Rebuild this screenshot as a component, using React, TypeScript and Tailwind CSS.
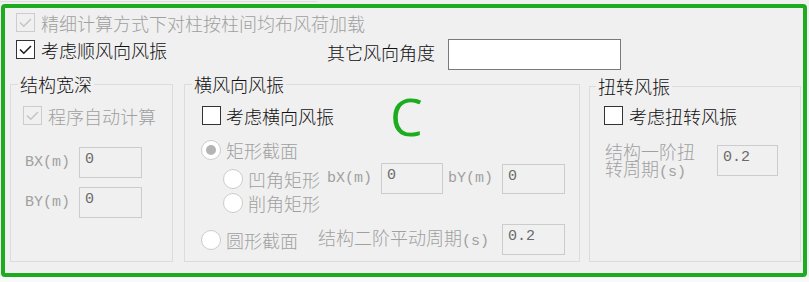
import React from "react";
import clsx from "clsx";

const CheckBox = ({ checked, disabled }: { checked?: boolean; disabled?: boolean }) => (
  <span
    className={clsx(
      "flex h-[19px] w-[19px] shrink-0 items-center justify-center border",
      disabled ? "border-[#cccccc] bg-[#f0f0f0]" : "border-[#333333] bg-white"
    )}
  >
    {checked && (
      <svg width="15" height="15" viewBox="0 0 15 15">
        <polyline
          points="2,7.5 5.8,11.3 13,4"
          fill="none"
          stroke={disabled ? "#c4c4c4" : "#1a1a1a"}
          strokeWidth="1.5"
        />
      </svg>
    )}
  </span>
);

const Radio = ({ selected }: { selected?: boolean }) => (
  <span className="flex h-[20px] w-[20px] shrink-0 items-center justify-center rounded-full border border-[#cccccc] bg-white">
    {selected && <span className="h-[10px] w-[10px] rounded-full bg-[#b4b4b4]" />}
  </span>
);

const Field = ({ value, className }: { value: string; className: string }) => (
  <div
    className={clsx(
      "shrink-0 border border-[#cccccc] bg-[#f0f0f0] pl-[5px] pt-[3px] font-['Liberation_Mono',monospace] text-[15px] leading-[18px] text-[#6a6a6a]",
      className
    )}
  >
    {value}
  </div>
);

const Mono = ({ children, className }: { children: React.ReactNode; className?: string }) => (
  <span className={clsx("font-['Liberation_Mono',monospace] text-[15px]", className)}>{children}</span>
);

export default function App() {
  return (
    <div className="h-[282px] w-[809px] overflow-hidden bg-[#f0f0f0] font-['Noto_Sans_CJK_SC',sans-serif] text-[18px] font-light leading-[20px] text-[#111111]">
      <div className="h-[4px]">
        <div className="h-[2px] w-[318px] border-b border-[#dedede]" />
      </div>
      <div className="ml-[1px] h-[273px] w-[806px] rounded-[4px] border-4 border-[#1dab1f] bg-[#f0f0f0]">
        {/* top options */}
        <div className="mt-[5px] flex h-[19px] items-center gap-[6px] pl-[11px]">
          <CheckBox checked disabled />
          <span className="text-[#a0a0a0]">精细计算方式下对柱按柱间均布风荷加载</span>
        </div>
        <div className="mt-[7px] flex items-start pl-[11px]">
          <div className="mt-[1px] flex h-[19px] w-[311px] items-center gap-[6px]">
            <CheckBox checked />
            <span>考虑顺风向风振</span>
          </div>
          <span className="mt-[3px]">其它风向角度</span>
          <div className="ml-[13px] h-[31px] w-[173px] border border-[#7a7a7a] bg-white" />
        </div>

        <div className="mt-[5px] flex items-start pl-[5px]">
          {/* 结构宽深 */}
          <fieldset className="h-[187px] w-[163px] border border-[#dcdcdc]">
            <legend className="ml-[7px] px-[2px] leading-[18px]">结构宽深</legend>
            <div className="ml-[12px] mt-[13px] flex h-[19px] items-center gap-[6px]">
              <CheckBox checked disabled />
              <span className="text-[#a0a0a0]">程序自动计算</span>
            </div>
            <div className="ml-[14px] mt-[22px] flex items-center">
              <Mono className="w-[54px] text-[#a0a0a0]">BX(m)</Mono>
              <Field value="0" className="h-[31px] w-[63px]" />
            </div>
            <div className="ml-[14px] mt-[9px] flex items-center">
              <Mono className="w-[54px] text-[#a0a0a0]">BY(m)</Mono>
              <Field value="0" className="h-[31px] w-[63px]" />
            </div>
          </fieldset>

          {/* 横风向风振 */}
          <fieldset className="ml-[11px] h-[187px] w-[396px] border border-[#dcdcdc]">
            <legend className="ml-[7px] px-[2px] leading-[18px]">横风向风振</legend>
            <div className="ml-[17px] mt-[13px] flex h-[19px] items-center gap-[5px]">
              <CheckBox />
              <span>考虑横向风振</span>
              <span className="ml-[51px] font-['Open_Sans',sans-serif] text-[52px] font-normal leading-none text-[#1dab1f]">
                C
              </span>
            </div>
            <div className="ml-[16px] mt-[15px] flex h-[20px] items-center gap-[5px]">
              <Radio selected />
              <span className="text-[#a0a0a0]">矩形截面</span>
            </div>
            <div className="ml-[38px] mt-[3px] flex h-[31px] items-center">
              <Radio />
              <span className="ml-[5px] w-[79px] text-[#a0a0a0]">凹角矩形</span>
              <Mono className="w-[54px] text-[#a0a0a0]">bX(m)</Mono>
              <Field value="0" className="h-[31px] w-[62px]" />
              <Mono className="ml-[5px] w-[54px] text-[#a0a0a0]">bY(m)</Mono>
              <Field value="0" className="h-[30px] w-[63px]" />
            </div>
            <div className="ml-[38px] -mt-[2px] flex h-[21px] items-center gap-[5px]">
              <Radio />
              <span className="text-[#a0a0a0]">削角矩形</span>
            </div>
            <div className="ml-[16px] mt-[11px] flex h-[31px] items-center">
              <Radio />
              <span className="ml-[5px] w-[92px] text-[#a0a0a0]">圆形截面</span>
              <span className="w-[184px] text-[#a0a0a0]">
                结构二阶平动周期<Mono>(s)</Mono>
              </span>
              <Field value="0.2" className="h-[31px] w-[63px]" />
            </div>
          </fieldset>

          {/* 扭转风振 */}
          <fieldset className="ml-[9px] mt-[2px] h-[185px] w-[212px] border border-[#dcdcdc]">
            <legend className="ml-[6px] px-[2px] leading-[18px]">扭转风振</legend>
            <div className="ml-[14px] mt-[11px] flex h-[19px] items-center gap-[6px]">
              <CheckBox />
              <span>考虑扭转风振</span>
            </div>
            <div className="ml-[15px] mt-[20px] flex items-start">
              <div className="-mt-[2px] w-[92px] text-[#a0a0a0]">
                <div className="h-[17px] leading-[17px]">结构一阶扭</div>
                <div className="h-[17px] leading-[17px]">
                  转周期<Mono>(s)</Mono>
                </div>
              </div>
              <Field value="0.2" className="ml-[20px] h-[31px] w-[61px]" />
            </div>
          </fieldset>
        </div>
      </div>
      <div className="h-[5px] bg-[#f9f9f9]" />
    </div>
  );
}
